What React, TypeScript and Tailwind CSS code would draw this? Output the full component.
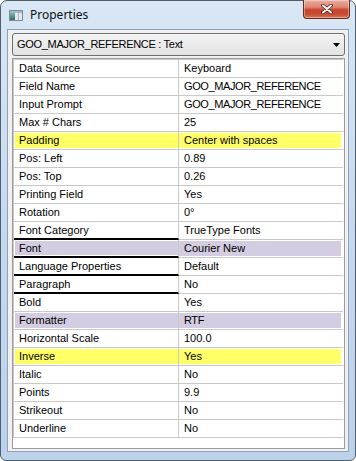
import React from 'react';

interface PropRow {
  name: string;
  value: string;
  bg?: string;
  marked?: boolean;
}

const yellow = 'bg-[#ffff66]';
const lilac = 'bg-[#d4cce0]';

const rows: PropRow[] = [
  { name: 'Data Source', value: 'Keyboard' },
  { name: 'Field Name', value: 'GOO_MAJOR_REFERENCE' },
  { name: 'Input Prompt', value: 'GOO_MAJOR_REFERENCE' },
  { name: 'Max # Chars', value: '25' },
  { name: 'Padding', value: 'Center with spaces', bg: yellow },
  { name: 'Pos: Left', value: '0.89' },
  { name: 'Pos: Top', value: '0.26' },
  { name: 'Printing Field', value: 'Yes' },
  { name: 'Rotation', value: '0°' },
  { name: 'Font Category', value: 'TrueType Fonts', marked: true },
  { name: 'Font', value: 'Courier New', bg: lilac, marked: true },
  { name: 'Language Properties', value: 'Default', marked: true },
  { name: 'Paragraph', value: 'No', marked: true },
  { name: 'Bold', value: 'Yes' },
  { name: 'Formatter', value: 'RTF', bg: lilac },
  { name: 'Horizontal Scale', value: '100.0' },
  { name: 'Inverse', value: 'Yes', bg: yellow },
  { name: 'Italic', value: 'No' },
  { name: 'Points', value: '9.9' },
  { name: 'Strikeout', value: 'No' },
  { name: 'Underline', value: 'No' },
];

// caps-only names render narrower in the original UI font
const isCaps = (s: string) => /^[A-Z_]+$/.test(s);

const WindowIcon = () => (
  <svg width="14" height="11" viewBox="0 0 14 11">
    <defs>
      <linearGradient id="teal" x1="0" y1="0" x2="0" y2="1">
        <stop offset="0" stopColor="#7fb8a8" />
        <stop offset="1" stopColor="#2f6f62" />
      </linearGradient>
    </defs>
    <rect x="0.5" y="0.5" width="13" height="10" fill="#e4e8ec" stroke="#7d8a98" />
    <rect x="1" y="1" width="12" height="2" fill="#9fb7d0" />
    <rect x="1" y="3" width="5" height="7" fill="url(#teal)" />
    <rect x="9" y="3" width="1" height="7" fill="#aab4be" />
  </svg>
);

const CloseGlyph = () => (
  <svg width="12" height="10" viewBox="0 0 12 10">
    <path d="M2 1.5 L10 8.5 M10 1.5 L2 8.5" stroke="#4a1c16" strokeWidth="3.6" strokeLinecap="round" />
    <path d="M2 1.5 L10 8.5 M10 1.5 L2 8.5" stroke="#ffffff" strokeWidth="2" strokeLinecap="round" />
  </svg>
);

export default function App() {
  return (
    <div className="w-[356px] h-[461px] bg-white font-['Liberation_Sans',Arial,sans-serif] text-[11px] text-black">
      <div className="flex h-full flex-col rounded-t-[7px] rounded-b-[6px] border border-[#4f5f70] bg-gradient-to-b from-[#d9e7f5] via-[#c5d9ee] to-[#bcd2ea]">
        {/* Title bar */}
        <div className="flex h-[28px] shrink-0 items-start">
          <div className="flex h-[28px] items-center gap-[7px] pl-[8px]">
            <WindowIcon />
            <span className="font-['Noto_Sans',sans-serif] text-[12px] leading-none text-[#111]">Properties</span>
          </div>
          <button className="ml-auto mr-[5px] -mt-[1px] flex h-[19px] w-[47px] items-center justify-center rounded-b-[4px] border border-t-0 border-[#6a2b22] bg-[linear-gradient(to_bottom,#ebaea0_0%,#df8572_40%,#c8432b_55%,#c74e34_80%,#d7775a_100%)] shadow-[inset_0_0_0_1px_rgba(255,255,255,0.35)]">
            <CloseGlyph />
          </button>
        </div>

        {/* Client area */}
        <div className="mx-[6px] flex flex-col border border-[#8ca2ba] bg-[#f0f0f0] pt-[3px] pb-[2px] pl-[4px] pr-[3px]">
          {/* Combo box */}
          <div className="flex h-[23px] items-center rounded-[3px] border border-[#707070] bg-gradient-to-b from-[#f4f4f4] to-[#e2e2e2] pl-[4px] pr-[4px]">
            <span className="tracking-[-0.3px]">GOO_MAJOR_REFERENCE : Text</span>
            <svg className="ml-auto" width="7" height="4" viewBox="0 0 7 4">
              <polygon points="0,0 7,0 3.5,4" fill="#000" />
            </svg>
          </div>

          {/* Property grid */}
          <div className="mt-[2px] h-[391px] border border-[#9c9c9c] bg-white">
            <div className="w-[330px] border-t border-l border-[#c9c9c9]">
              {rows.map((row) => (
                <div key={row.name} className="flex h-[18px]">
                  <div
                    className={`h-[18px] w-[165px] shrink-0 border-r border-r-[#c9c9c9] py-[1px] pl-[1px] ${
                      row.marked ? 'border-b-2 border-b-black' : 'border-b border-b-[#c9c9c9]'
                    }`}
                  >
                    <div className={`flex h-full items-center pl-[4px] whitespace-nowrap ${row.bg ?? ''}`}>
                      {row.name}
                    </div>
                  </div>
                  <div className="h-[18px] flex-1 border-b border-[#c9c9c9] py-[1px] pr-[2px]">
                    <div
                      className={`flex h-full items-center pl-[5px] whitespace-nowrap ${row.bg ?? ''} ${
                        isCaps(row.value) ? 'tracking-[-0.4px]' : ''
                      }`}
                    >
                      {row.value}
                    </div>
                  </div>
                </div>
              ))}
            </div>
          </div>
        </div>
      </div>
    </div>
  );
}
